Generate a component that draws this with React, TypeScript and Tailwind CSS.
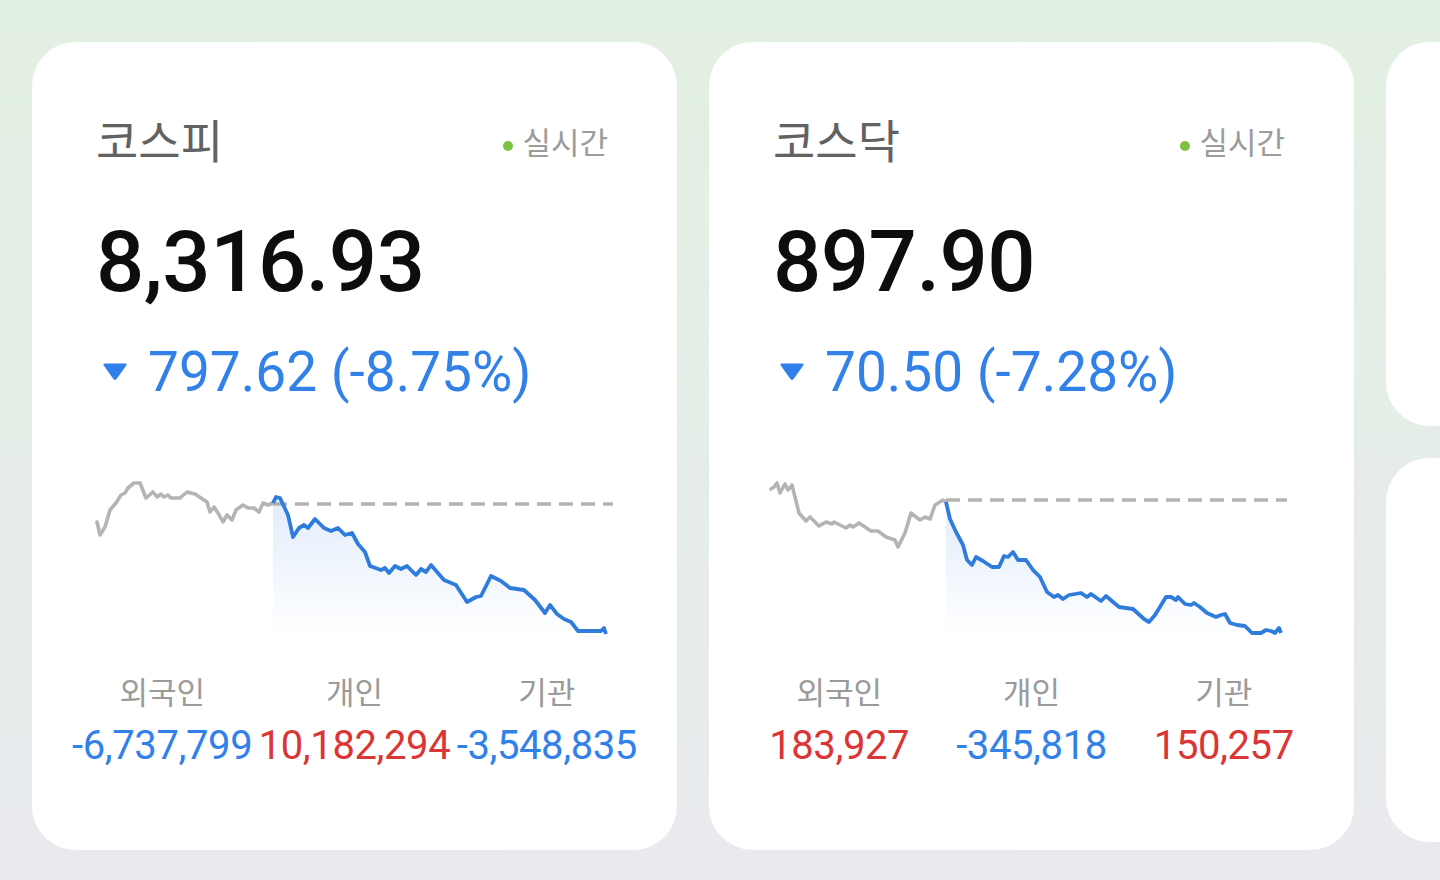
import React from 'react';

type Pt = [number, number];

interface IndexCard {
  name: string;
  left: number;
  value: string;
  change: string;
  prevY: number;
  grey: Pt[];
  blue: Pt[];
  investors: { label: string; value: string; up: boolean }[];
}

const CHART_TOP = 470;
const CHART_H = 175;

const cards: IndexCard[] = [
  {
    name: '코스피',
    left: 32,
    value: '8,316.93',
    change: '797.62 (-8.75%)',
    prevY: 504,
    grey: [
      [97, 522], [100, 535], [105, 527], [110, 510], [116, 503], [121, 495], [125, 493], [128, 488],
      [134, 483], [140, 483], [146, 498], [153, 492], [157, 497], [161, 494], [164, 497], [168, 495],
      [171, 498], [180, 498], [187, 492], [195, 494], [207, 502], [210, 512], [214, 507], [218, 513],
      [223, 522], [227, 515], [232, 520], [236, 510], [243, 505], [248, 508], [254, 508], [259, 512],
      [263, 503], [268, 505], [273, 503],
    ],
    blue: [
      [273, 503], [276, 497], [280, 498], [288, 515], [293, 537], [299, 528], [304, 525], [308, 528],
      [315, 519], [324, 528], [331, 531], [338, 528], [345, 535], [352, 533], [358, 544], [365, 552],
      [370, 566], [381, 570], [385, 568], [389, 573], [395, 566], [401, 569], [407, 566], [416, 575],
      [421, 569], [426, 572], [431, 565], [444, 580], [456, 585], [467, 602], [476, 597], [481, 596],
      [491, 576], [501, 581], [510, 588], [524, 590], [535, 600], [545, 613], [550, 605], [557, 614],
      [564, 619], [571, 622], [578, 631], [601, 631], [604, 628], [606, 634],
    ],
    investors: [
      { label: '외국인', value: '-6,737,799', up: false },
      { label: '개인', value: '10,182,294', up: true },
      { label: '기관', value: '-3,548,835', up: false },
    ],
  },
  {
    name: '코스닥',
    left: 709,
    value: '897.90',
    change: '70.50 (-7.28%)',
    prevY: 500,
    grey: [
      [771, 489], [774, 487], [777, 483], [780, 493], [785, 484], [788, 490], [792, 485], [799, 513],
      [806, 521], [810, 517], [819, 526], [826, 522], [832, 524], [834, 522], [846, 528], [850, 525],
      [853, 527], [859, 523], [871, 531], [878, 531], [886, 537], [895, 540], [898, 547], [905, 533],
      [911, 513], [920, 520], [925, 517], [930, 519], [935, 505], [943, 500], [946, 502],
    ],
    blue: [
      [946, 502], [950, 519], [956, 532], [963, 545], [967, 560], [972, 565], [976, 557], [983, 561],
      [992, 567], [999, 567], [1004, 556], [1008, 557], [1013, 552], [1018, 560], [1026, 560], [1033, 570],
      [1040, 577], [1047, 592], [1054, 597], [1058, 595], [1063, 599], [1069, 595], [1081, 593], [1087, 597],
      [1091, 594], [1101, 601], [1106, 596], [1119, 607], [1133, 609], [1144, 619], [1149, 622], [1155, 615],
      [1166, 597], [1171, 597], [1176, 600], [1178, 597], [1185, 604], [1191, 605], [1194, 603], [1200, 607],
      [1207, 613], [1216, 617], [1221, 615], [1225, 614], [1230, 623], [1237, 625], [1245, 626], [1252, 633],
      [1261, 633], [1266, 630], [1271, 631], [1275, 633], [1279, 628], [1281, 633],
    ],
    investors: [
      { label: '외국인', value: '183,927', up: true },
      { label: '개인', value: '-345,818', up: false },
      { label: '기관', value: '150,257', up: true },
    ],
  },
];

const FONT = "Roboto, 'Noto Sans CJK KR', sans-serif";

const MiniChart: React.FC<{ card: IndexCard }> = ({ card }) => {
  // points are page coords, shift them into the card's chart box
  const toLocal = (pts: Pt[]) => pts.map(([x, y]) => `${x - card.left},${y - CHART_TOP}`).join(' ');
  const startX = card.blue[0][0] - card.left;
  const endX = card.blue[card.blue.length - 1][0] - card.left;
  const bottom = CHART_H - 10;
  const area = `${startX},${bottom} ${toLocal(card.blue)} ${endX},${bottom}`;
  const gid = `fill-${card.left}`;

  return (
    <svg width="645" height={CHART_H} viewBox={`0 0 645 ${CHART_H}`} className="block">
      <defs>
        <linearGradient id={gid} x1="0" y1="0" x2="0" y2="1">
          <stop offset="0%" stopColor="#e1ecfb" />
          <stop offset="100%" stopColor="#ffffff" />
        </linearGradient>
      </defs>
      <polygon points={area} fill={`url(#${gid})`} />
      <line
        x1={startX}
        y1={card.prevY - CHART_TOP}
        x2={card.left === 32 ? 581 : 578}
        y2={card.prevY - CHART_TOP}
        stroke="#b3b3b3"
        strokeWidth="3.4"
        strokeDasharray="14 8"
      />
      <polyline points={toLocal(card.grey)} fill="none" stroke="#b4b4b4" strokeWidth="3.6" strokeLinejoin="round" strokeLinecap="round" />
      <polyline points={toLocal(card.blue)} fill="none" stroke="#2f7cdd" strokeWidth="3.8" strokeLinejoin="round" />
    </svg>
  );
};

const Card: React.FC<{ card: IndexCard }> = ({ card }) => (
  <div className="w-[645px] h-[808px] shrink-0 rounded-[44px] bg-white pt-[72px] flex flex-col">
    <div className="flex items-center justify-between pl-[64px] pr-[69px] h-[56px]">
      <span className="text-[46px] leading-[56px] text-[#626262]">{card.name}</span>
      <span className="flex items-center gap-[9px] text-[31px] leading-[40px] text-[#9c9c9c] mt-[4px]">
        <span className="w-[10px] h-[10px] rounded-full bg-[#7dc243] mt-[3px]" />
        실시간
      </span>
    </div>
    <div className="mt-[42px] pl-[64px] h-[100px] text-[85px] leading-[100px] font-medium text-[#0d0d0d] tracking-[-0.5px]">
      {card.value}
    </div>
    <div className="mt-[28px] pl-[70px] h-[64px] flex items-center gap-[20px] text-[55px] leading-[64px] text-[#3181e9]">
      <svg width="26" height="19" viewBox="0 0 26 19" className="mt-[-2px]">
        <path d="M3 1.5 H23 Q25.5 1.5 24.2 3.6 L14.6 17 Q13 19 11.4 17 L1.8 3.6 Q0.5 1.5 3 1.5 Z" fill="#2f80ed" />
      </svg>
      <span>{card.change}</span>
    </div>
    <div className="mt-[66px]">
      <MiniChart card={card} />
    </div>
    <div className="mt-[29px] grid grid-cols-3 px-[34px]">
      {card.investors.map((inv) => (
        <div key={inv.label} className="flex flex-col items-center">
          <span className="text-[31px] leading-[40px] text-[#9a9a9a]">{inv.label}</span>
          <span
            className={`mt-[8px] text-[40px] leading-[48px] whitespace-nowrap tracking-[-0.4px] ${
              inv.up ? 'text-[#dc3535]' : 'text-[#3181e9]'
            }`}
          >
            {inv.value}
          </span>
        </div>
      ))}
    </div>
  </div>
);

export default function App() {
  return (
    <div
      className="w-[1440px] h-[880px] overflow-hidden bg-gradient-to-b from-[#e2f0e2] to-[#e9eaee] pt-[42px] pl-[32px] flex gap-[32px]"
      style={{ fontFamily: FONT }}
    >
      {cards.map((c) => (
        <Card key={c.name} card={c} />
      ))}
      <div className="flex flex-col gap-[32px] shrink-0">
        <div className="w-[200px] h-[384px] rounded-[44px] bg-white" />
        <div className="w-[200px] h-[384px] rounded-[44px] bg-white" />
      </div>
    </div>
  );
}
